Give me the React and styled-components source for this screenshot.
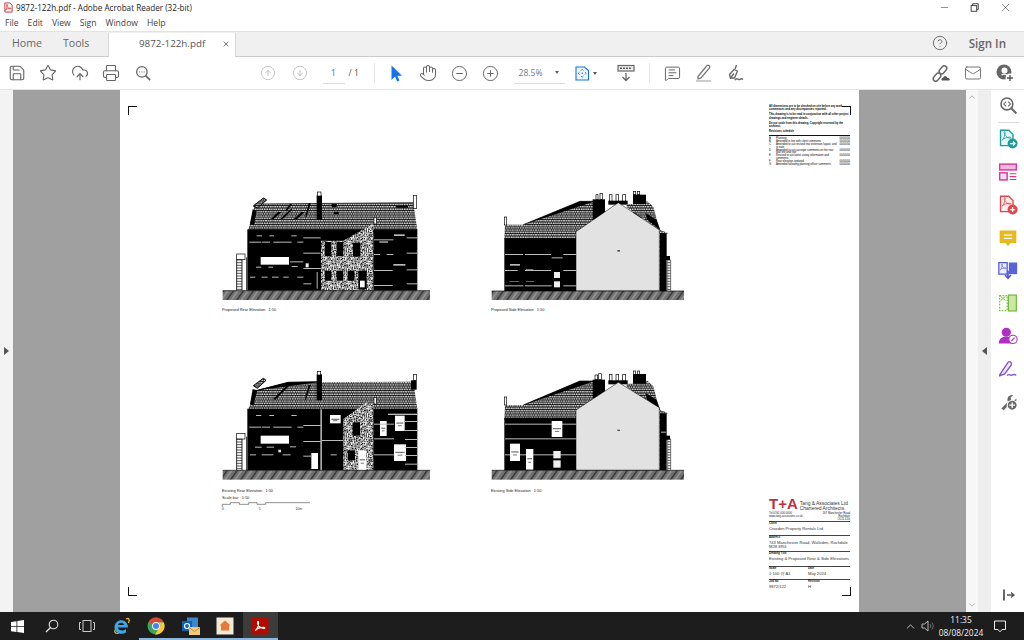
import React from 'react';
import styled, { createGlobalStyle } from 'styled-components';
import {
    Save, Star, CloudUpload, Printer, CircleArrowUp, CircleArrowDown, Hand, CircleMinus, CirclePlus,
    MessageSquareText, Mail, CircleHelp, ChevronUp, ChevronDown, Minus, X,
} from 'lucide-react';

const GlobalStyle = createGlobalStyle`
    html, body { margin: 0; padding: 0; background: #fff; }
    * { box-sizing: border-box; }
`;

const uiFont = '"Open Sans", "Noto Sans", sans-serif';
const drawingFont = '"Liberation Sans", Arial, sans-serif';

const Window = styled.div`
    width: 1024px;
    height: 640px;
    display: flex;
    flex-direction: column;
    overflow: hidden;
    font-family: ${uiFont};
    color: #444;
`;

const TitleBar = styled.div`
    height: 15px;
    display: flex;
    align-items: center;
    padding-left: 3px;
    gap: 2px;
    font-size: 8.15px;
    color: #222;
`;

const WindowControls = styled.div`
    margin-left: auto;
    display: flex;
    align-items: center;
    padding-right: 12px;
    gap: 20px;
    color: #333;
`;

const MenuBar = styled.div`
    height: 16px;
    display: flex;
    align-items: center;
    padding-left: 5px;
    gap: 9px;
    font-size: 8.6px;
    color: #444;
`;

const TabBar = styled.div`
    height: 26px;
    display: flex;
    align-items: stretch;
    background: #f0f0f0;
    border-top: 1px solid #e2e2e2;
    border-bottom: 1px solid #ccc;
    font-size: 10.6px;
    color: #666;
`;

const NavTab = styled.div`
    display: flex;
    align-items: center;
    padding: 0 0 2px 12px;
    width: ${p => p.$width}px;
`;

const DocTab = styled.div`
    width: 128px;
    margin-bottom: -1px;
    margin-top: 1px;
    background: #fff;
    border-left: 1px solid #d8d8d8;
    border-right: 1px solid #d8d8d8;
    display: flex;
    align-items: center;
    padding: 0 0 3px 30px;
    color: #555;
    gap: 17px;
    font-size: 9.8px;
    white-space: nowrap;
`;

const TabActions = styled.div`
    margin-left: auto;
    display: flex;
    align-items: center;
    gap: 21px;
    padding: 0 18px 2px 0;
`;

const SignIn = styled.span`
    font-size: 11.6px;
    font-weight: 600;
    color: #666;
`;

const Toolbar = styled.div`
    height: 33px;
    display: flex;
    align-items: center;
    border-bottom: 1px solid #e4e4e4;
    padding-left: 1px;
`;

const ToolGroup = styled.div`
    display: flex;
    align-items: center;
    margin-left: ${p => p.$offset || 0}px;
`;

const ToolSlot = styled.div`
    width: ${p => p.$width || 31.5}px;
    height: 24px;
    display: flex;
    align-items: center;
    justify-content: center;
    color: ${p => p.$color || '#666'};
`;

const Separator = styled.div`
    width: 1px;
    height: 20px;
    background: #e4e4e4;
`;

const PageField = styled.div`
    width: 22px;
    margin-left: 7px;
    text-align: center;
    font-size: 8.6px;
    line-height: 20px;
    color: #666;
    border-bottom: 1px solid #dcdcdc;
`;

const PageTotal = styled.div`
    font-size: 8.6px;
    color: #555;
    margin-left: 4px;
    width: 25px;
`;

const ZoomField = styled.div`
    width: 51px;
    display: flex;
    align-items: center;
    justify-content: space-between;
    padding: 0 6px 0 5px;
    font-size: 8.6px;
    line-height: 20px;
    color: #777;
    border-bottom: 1px solid #dcdcdc;
    margin-left: 7px;
`;

const Caret = styled.span`
    width: 0;
    height: 0;
    margin-left: ${p => p.$space || 0}px;
    border-left: 2.5px solid transparent;
    border-right: 2.5px solid transparent;
    border-top: 3px solid ${p => p.$color || '#666'};
`;

const Workspace = styled.div`
    flex: 1;
    display: flex;
    min-height: 0;
`;

const LeftRail = styled.div`
    width: 13px;
    background: #f3f3f3;
    display: flex;
    align-items: center;
    justify-content: center;
`;

const Arrow = styled.span`
    width: 0;
    height: 0;
    border-top: 4px solid transparent;
    border-bottom: 4px solid transparent;
    ${p => (p.$dir === 'left' ? 'border-right: 5px solid #555;' : 'border-left: 5px solid #555;')}
`;

const Canvas = styled.div`
    flex: 1;
    background: #a0a0a0;
    display: flex;
    justify-content: center;
`;

const Sheet = styled.div`
    width: 739px;
    background: #fff;
    position: relative;
    display: flex;
    font-family: ${drawingFont};
    color: #111;
`;

const CropMark = styled.span`
    position: absolute;
    width: 9px;
    height: 9px;
    border-color: #111;
    border-style: solid;
    border-width: ${p => (p.$top ? '1px' : '0')} ${p => (p.$right ? '1px' : '0')} ${p => (p.$top ? '0' : '1px')} ${p => (p.$right ? '0' : '1px')};
    ${p => (p.$top ? 'top: 16px;' : 'bottom: 16px;')}
    ${p => (p.$right ? 'right: 8px;' : 'left: 8px;')}
`;

const Drawings = styled.div`
    display: grid;
    grid-template-columns: 230px 220px;
    grid-template-rows: 140px 150px;
    column-gap: 40px;
    row-gap: 45px;
    padding: 90px 0 0 90px;
    align-content: start;
`;

const Figure = styled.figure`
    margin: 0;
    display: flex;
    flex-direction: column;
    svg { display: block; }
`;

const Caption = styled.figcaption`
    font-size: 3.9px;
    line-height: 7px;
    padding-left: ${p => p.$indent}px;
    margin-top: ${p => p.$gap || 0}px;
    color: #222;
    white-space: nowrap;
`;

const SideColumn = styled.div`
    margin-left: auto;
    width: 81px;
    margin-right: 9px;
    padding: 15px 0 16px;
    display: flex;
    flex-direction: column;
    justify-content: space-between;
`;

const Notes = styled.div`
    font-size: 2.7px;
    line-height: 3.2px;
    color: #000;
    font-weight: 700;
`;

const NoteText = styled.p`
    margin: 0 0 2px;
`;

const Revisions = styled.div`
    border-top: 0.6px solid #111;
    margin-top: 1.5px;
    padding-top: 1.5px;
    font-weight: 400;
    line-height: 2.8px;
`;

const RevisionRow = styled.div`
    display: grid;
    grid-template-columns: 7px 1fr 12px;
    margin-bottom: 0.2px;
    span:last-child { text-align: right; }
`;

const TitleBlock = styled.div`
    display: flex;
    flex-direction: column;
`;

const LogoRow = styled.div`
    display: flex;
    align-items: flex-start;
    gap: 2px;
    height: 14px;
`;

const LogoMark = styled.div`
    font-size: 15px;
    line-height: 12px;
    font-weight: 700;
    color: #b93442;
`;

const Practice = styled.div`
    font-size: 4.9px;
    line-height: 5px;
    padding-top: 3px;
    color: #333;
    white-space: nowrap;
`;

const ContactRow = styled.div`
    display: flex;
    justify-content: space-between;
    font-size: 2.8px;
    line-height: 3px;
    height: 9px;
    color: #222;
    span:last-child { text-align: right; }
`;

const Field = styled.div`
    border-top: 0.7px solid #444;
    height: ${p => p.$height}px;
    padding-top: 0.3px;
    min-width: 0;
`;

const FieldLabel = styled.div`
    font-size: 2.8px;
    line-height: 3.2px;
    font-weight: 700;
`;

const FieldValue = styled.div`
    font-size: 4.1px;
    line-height: 4.7px;
    padding-top: 1px;
    color: #333;
`;

const FieldPair = styled.div`
    display: grid;
    grid-template-columns: 39px 1fr;
`;

const ScrollTrack = styled.div`
    width: 12px;
    background: #f7f7f7;
    display: flex;
    flex-direction: column;
    justify-content: space-between;
    align-items: center;
    padding: 2px 0;
    color: #aaa;
`;

const Gutter = styled.div`
    width: 13px;
    background: #eeeeee;
    display: flex;
    align-items: center;
    justify-content: center;
`;

const Sidebar = styled.div`
    width: 33px;
    background: #fff;
    display: flex;
    flex-direction: column;
    align-items: center;
    padding-top: 2px;
    padding-left: 1px;
`;

const SideTool = styled.div`
    width: 32px;
    height: ${p => p.$height || 32.75}px;
    flex: none;
    display: flex;
    align-items: center;
    justify-content: center;
`;

const SideDivider = styled.div`
    width: 21px;
    height: 1px;
    background: #ddd;
    margin-top: 4px;
`;

const Collapse = styled.div`
    margin-top: auto;
    height: 34px;
    display: flex;
    align-items: center;
    color: #555;
`;

const Taskbar = styled.div`
    height: 28px;
    background: #1d1d1d;
    display: flex;
    align-items: stretch;
    color: #eee;
`;

const TaskSlot = styled.div`
    width: 34.7px;
    display: flex;
    align-items: center;
    justify-content: center;
    background: ${p => (p.$active ? '#3c3c3c' : 'transparent')};
    border-bottom: 2px solid ${p => (p.$open ? '#8ab8dc' : 'transparent')};
    border-top: 2px solid transparent;
`;

const Tray = styled.div`
    margin-left: auto;
    display: flex;
    align-items: center;
    padding-right: 10px;
`;

const TrayIcon = styled.div`
    width: ${p => p.$width}px;
    display: flex;
    align-items: center;
    justify-content: center;
`;

const Clock = styled.div`
    width: 50px;
    text-align: center;
    font-size: 8.4px;
    line-height: 13px;
    color: #f0f0f0;
`;

const ScaleLabels = styled.div`
    display: flex;
    width: 92px;
    justify-content: space-between;
    font-size: 3.4px;
    line-height: 4px;
    margin-top: -8px;
    padding-left: 12px;
    color: #333;
`;

const Svg = ({ size = 18, box = 24, children, ...rest }) => (
    <svg width={size} height={size} viewBox={`0 0 ${box} ${box}`} fill="none" {...rest}>
        {children}
    </svg>
);

const swoosh = 'M5 18c2.5-2.5 4.5-8 4.5-11.5 0-2-1.5-2-1.5 0 0 4 4.5 8.5 9 8.5 1.8 0 1.5-1.5-.5-1.5-3.5 0-9.5 1.5-11.5 4.5z';

const PdfFile = () => (
    <Svg size={11} box={24} stroke="#c9343a" strokeWidth="2">
        <path d="M4 2h11l5 5v15H4z" fill="#fbeeee" />
        <path d={swoosh} strokeWidth="1.4" />
    </Svg>
);

const RestoreIcon = () => (
    <Svg size={9} box={12} stroke="#333" strokeWidth="1.2">
        <rect x="1.5" y="3.5" width="7.5" height="7.5" />
        <path d="M3.5 3.5V1h7.5v7.5H9" />
    </Svg>
);

const SearchDots = () => (
    <Svg>
        <circle cx="10.5" cy="10.5" r="7" stroke="#666" strokeWidth="1.7" />
        <path d="M15.5 15.5L21.5 21.5" stroke="#666" strokeWidth="2.2" />
        <path d="M7 10.5h1M10 10.5h1M13 10.5h1" stroke="#666" strokeWidth="1.6" />
    </Svg>
);

const CursorIcon = () => (
    <Svg size={17} box={17}>
        <path d="M3.5 0.5V15l3.5-3.5 2.2 5 2.3-1-2.2-4.8H14z" fill="#1473e6" />
    </Svg>
);

const FitIcon = () => (
    <Svg size={15} box={15}>
        <path d="M1 1h8.500l4 3.500V14H1z" fill="#eef5fc" stroke="#1473e6" strokeWidth="1.1" />
        <path d="M6 4.500l1.200-1.200 1.200 1.200M6 10l1.200 1.200L8.400 10M4.500 6.200L3.300 7.300l1.200 1.200M10 6.200l1.200 1.100L10 8.500" stroke="#1473e6" strokeWidth="0.9" />
        <circle cx="7.200" cy="7.300" r="0.800" fill="#1473e6" />
    </Svg>
);

const ScrollModeIcon = () => (
    <Svg size={18} box={18}>
        <rect x="1" y="1.500" width="16" height="5.500" fill="#eee" stroke="#666" strokeWidth="1.200" />
        <path d="M3 4.200h12" stroke="#555" strokeWidth="1.400" strokeDasharray="2 1" />
        <path d="M9 9v7.500M5.500 13L9 16.500 12.500 13" stroke="#666" strokeWidth="1.300" />
    </Svg>
);

const HighlightIcon = () => (
    <Svg size={20} box={20}>
        <path d="M4 13.500L13 2.500c1.500-1 3.500.5 2.500 2.500L7 15l-3 .8z" stroke="#777" strokeWidth="1.300" />
        <path d="M2 18h15" stroke="#bbb" strokeWidth="1.500" />
    </Svg>
);

const SketchIcon = () => (
    <Svg size={20} box={20}>
        <path d="M9 6.500l3.500 1.500-3 7H5.500L4.500 11.500z" stroke="#666" strokeWidth="1.300" />
        <path d="M10 6L11.500 2M5 15.500L9 10.500" stroke="#666" strokeWidth="1.300" />
        <path d="M10 17c2-3 3 0 4.500-.5s2-1.500 3.500 0" stroke="#666" strokeWidth="1.500" />
    </Svg>
);

const ShareLinkIcon = () => (
    <Svg size={20} box={20}>
        <rect x="-6" y="-2.500" width="9" height="5" rx="2.500" stroke="#666" strokeWidth="1.400" transform="translate(6 13) rotate(-50)" />
        <rect x="-3" y="-2.500" width="9" height="5" rx="2.500" stroke="#666" strokeWidth="1.400" transform="translate(10 8) rotate(-50)" />
        <path d="M10.500 17.500c-1.500 0-1.500-2.500.5-2.500 .5-2.500 4-2.500 4.500 0 2-.5 3.500 2.500 1 2.500z" fill="#555" />
    </Svg>
);

const AddUserIcon = () => (
    <Svg size={20} box={20}>
        <circle cx="9" cy="9" r="7.500" fill="#666" />
        <circle cx="9.500" cy="7.500" r="3" fill="#fff" />
        <path d="M12.500 12.500a5 5 0 0 0-6-.5" stroke="#fff" strokeWidth="1.400" />
        <circle cx="15" cy="15" r="4.500" fill="#fff" />
        <path d="M15 12v6M12 15h6" stroke="#555" strokeWidth="1.400" />
    </Svg>
);

const SideSearch = () => (
    <Svg size={19}>
        <circle cx="10" cy="10" r="7.500" stroke="#666" strokeWidth="2" />
        <path d="M15.500 15.500L22 22" stroke="#666" strokeWidth="2.600" />
        <path d="M9 7l-3 3 3 3M11.500 7l3 3-3 3" stroke="#666" strokeWidth="1.300" />
    </Svg>
);

const DocWithBadge = ({ color, tint, children }) => (
    <Svg size={20}>
        <path d="M3 1.500h10l5 5V20H3z" fill={tint} stroke={color} strokeWidth="1.600" />
        <path d={swoosh} stroke={color} strokeWidth="1.200" transform="translate(1 -1) scale(.8)" />
        <circle cx="17.500" cy="17.500" r="6" fill={color} />
        {children}
    </Svg>
);

const LayoutTool = () => (
    <Svg size={20} stroke="#d8369d" strokeWidth="1.700">
        <rect x="2" y="2.500" width="20" height="7" fill="#f6b7dc" />
        <rect x="2" y="13" width="9" height="8.500" fill="#fbdcee" />
        <path d="M14 14h8M14 17.500h8M14 21h8" strokeWidth="1.300" />
    </Svg>
);

const CommentTool = () => (
    <Svg size={20}>
        <path d="M2 3h20v15h-7l-3 4-3-4H2z" fill="#e5b91f" />
        <path d="M7 8.500h10M7 12.500h10" stroke="#fff" strokeWidth="1.600" />
    </Svg>
);

const CombineTool = () => (
    <Svg size={20}>
        <path d="M1 3h10v14H1z" fill="#eef" stroke="#4f57d6" strokeWidth="1.500" />
        <path d="M13 3h10v14H13z" fill="#5a62d8" />
        <path d={swoosh} stroke="#4f57d6" strokeWidth="1.300" transform="translate(0 2) scale(.55)" />
        <path d="M12 13v8M8.500 18l3.500 4 3.500-4" stroke="#4f57d6" strokeWidth="2" />
    </Svg>
);

const OrganizeTool = () => (
    <Svg size={20}>
        <path d="M2 3h9v18H2z" stroke="#7fbf3f" strokeWidth="1.500" strokeDasharray="2 1.500" />
        <rect x="12.500" y="2.500" width="9.500" height="19" fill="#cbe8a8" stroke="#74b83a" strokeWidth="1.500" />
        <path d="M3 4l6 5M9 4L3 9" stroke="#7fbf3f" strokeWidth="1.200" />
    </Svg>
);

const RequestTool = () => (
    <Svg size={20}>
        <circle cx="10" cy="7.500" r="5.500" fill="#b12fc4" />
        <path d="M1 21c0-6 4-8 9-8s8 2 8 8z" fill="#b12fc4" />
        <circle cx="18" cy="16" r="5" fill="#fff" stroke="#b12fc4" strokeWidth="1.300" />
        <path d="M16 18l4-4" stroke="#b12fc4" strokeWidth="1.300" />
    </Svg>
);

const SignTool = () => (
    <Svg size={20}>
        <path d="M2 19L12 4c2-2 5 0 4 3L8 18l-6 2z" fill="#f0e8fa" stroke="#8556c6" strokeWidth="1.700" />
        <path d="M11 20c2-3 3 0 5-.5s3-2 6 0" stroke="#8556c6" strokeWidth="1.700" />
    </Svg>
);

const WrenchTool = () => (
    <Svg size={20}>
        <path d="M4 21l8-8c-2-4 1-9 6-8l-3 3 1 3 3 1 3-3c1 5-4 8-8 6l-7 8z" fill="#666" />
        <circle cx="17" cy="17" r="6" fill="#666" stroke="#fff" strokeWidth="1.300" />
        <path d="M17 13.500v7M13.500 17h7" stroke="#fff" strokeWidth="1.500" />
    </Svg>
);

const CollapseIcon = () => (
    <Svg size={14} box={14} stroke="#555" strokeWidth="1.400">
        <path d="M3 1.500v11" strokeWidth="1.800" />
        <path d="M6 7h7M10 4.500L13 7l-3 2.500" />
    </Svg>
);

const WindowsLogo = () => (
    <Svg size={13} box={13} fill="#fff">
        <path d="M0 2l5.500-.8v5H0zM6.300 1l6.700-1v6.200H6.300zM0 7h5.500v5L0 11.200zM6.300 7H13v6l-6.700-1z" />
    </Svg>
);

const SearchGlass = () => (
    <Svg size={14} box={14} stroke="#ddd" strokeWidth="1.100">
        <circle cx="8.500" cy="5.500" r="4.300" />
        <path d="M5.500 8.500L1 13" strokeWidth="1.400" />
    </Svg>
);

const TaskView = () => (
    <Svg size={16} box={16} stroke="#ccc" strokeWidth="1">
        <rect x="4" y="2.500" width="8" height="11" />
        <path d="M2 4.500H.5v7H2M14 4.500h1.500v7H14" />
    </Svg>
);

const EdgeLogo = () => (
    <Svg size={20} box={20}>
        <path d="M4 14c-1 3 1 4 4 3M15 3c3-1.500 4 .5 2.500 4" stroke="#e9b72c" strokeWidth="1.300" />
        <path d="M17 11.500H7c.3 3.500 5 4 8 1.500v3.500c-5 3-12 .5-11.500-5.500C4 5 9.500 3 13.500 5c2.500 1.500 3.500 4 3.500 6.500zM13 9c-.3-3-5.500-3-6 0z" fill="#3ea6e6" fillRule="evenodd" />
    </Svg>
);

const ChromeLogo = () => (
    <Svg size={18} box={18}>
        <circle cx="9" cy="9" r="8.500" fill="#3aa757" />
        <path d="M1.800 4.500A8.500 8.500 0 0 1 16.800 5.500H9a3.600 3.600 0 0 0-3.400 2.600z" fill="#db4437" />
        <path d="M16.800 5.500A8.500 8.500 0 0 1 8 17.400l3.900-6.200a3.600 3.600 0 0 0 0-5.700z" fill="#fcc934" />
        <circle cx="9" cy="9" r="3.900" fill="#fff" />
        <circle cx="9" cy="9" r="3" fill="#4285f4" />
    </Svg>
);

const OutlookLogo = () => (
    <Svg size={20} box={20}>
        <rect x="6" y="1.500" width="11" height="11" fill="#3b86cf" />
        <rect x="1" y="5" width="10" height="10" fill="#0f63b0" />
        <circle cx="6" cy="10" r="2.500" stroke="#fff" strokeWidth="1.200" />
        <rect x="8" y="11" width="11" height="8" fill="#f2c879" />
        <path d="M8 11.500l5.500 4 5.500-4" stroke="#a87c32" strokeWidth="0.800" />
    </Svg>
);

const HomeApp = () => (
    <Svg size={18} box={18}>
        <rect x="0.500" y="0.500" width="17" height="17" fill="#f4e9d2" />
        <path d="M9 3.500l5.500 5H13v5H5v-5H3.500z" fill="#e8793a" />
    </Svg>
);

const AcrobatApp = () => (
    <Svg size={18} box={18}>
        <rect x="0.500" y="0.500" width="17" height="17" rx="1.500" fill="#b30b00" />
        <path d={swoosh} stroke="#fff" strokeWidth="1.600" transform="scale(.72) translate(1 1)" />
    </Svg>
);

const Speaker = () => (
    <Svg size={14} box={14} stroke="#ccc" strokeWidth="0.900">
        <path d="M1 5h2.500L7 2v10L3.500 9H1z" />
        <path d="M9 5c1 1 1 3 0 4M11 3.500c1.500 2 1.500 5 0 7" stroke="#777" />
    </Svg>
);

const TrayNote = () => (
    <Svg size={14} box={14} stroke="#eee" strokeWidth="1">
        <path d="M1.500 2h11v8.500H9L7 12.800 5 10.500H1.500z" />
    </Svg>
);

// one speck per grid cell, jittered by a hash, so the stone stays even and repeatable
const stones = (() => {
    const hash = n => {
        const v = Math.sin(n * 12.9898) * 43758.5453;
        return v - Math.floor(v);
    };
    const list = [];
    for (let row = 0; row < 10; row += 1) {
        for (let col = 0; col < 10; col += 1) {
            const n = row * 10 + col + 1;
            list.push([col * 6 + hash(n) * 2, row * 6 + hash(n + 200) * 2, 2.5 + hash(n + 400) * 2.5, 2.5 + hash(n + 600) * 2.5]);
        }
    }
    return list;
})();

const Patterns = () => (
    <defs>
        <pattern id="tiles" width="14" height="14" patternUnits="userSpaceOnUse">
            <rect width="14" height="14" fill="#000" />
            <rect x="1" y="1.500" width="5" height="4" fill="#fff" />
            <rect x="8" y="1.500" width="5" height="4" fill="#fff" />
            <rect x="4.500" y="8.500" width="5" height="4" fill="#fff" />
            <rect x="11.500" y="8.500" width="2.500" height="4" fill="#fff" />
            <rect x="0" y="8.500" width="2.500" height="4" fill="#fff" />
        </pattern>
        <pattern id="stone" width="60" height="60" patternUnits="userSpaceOnUse">
            <rect width="60" height="60" fill="#fff" />
            {stones.map(([x, y, w, h], i) => (
                <rect key={i} x={x} y={y} width={w} height={h} fill="#000" />
            ))}
        </pattern>
        <pattern id="ground" width="30" height="28" patternUnits="userSpaceOnUse" patternTransform="skewX(-35)">
            <rect width="30" height="28" fill="#717171" />
            <rect width="6" height="28" fill="#3f3f3f" />
            <rect x="14" width="5" height="28" fill="#9a9a9a" />
        </pattern>
    </defs>
);

const Bars = ({ items, fill = '#ddd', h = 3 }) =>
    items.map(([x, y, w, height = h], i) => <rect key={i} x={x} y={y} width={w} height={height} fill={fill} />);

const Ground = ({ x, y, w }) => (
    <g>
        <rect x={x} y={y} width={w} height={28} fill="url(#ground)" />
        <path d={`M${x} ${y}h${w}`} stroke="#000" strokeWidth="2" />
    </g>
);

const OpenCap = ({ x, y, w, h }) => <rect x={x} y={y} width={w} height={h} fill="#fff" stroke="#000" strokeWidth="2" />;

const Ladder = ({ y, bottom }) => {
    const rungs = [];
    for (let r = y + 18; r < bottom; r += 8) rungs.push(r);
    return (
        <g stroke="#000">
            <rect x="80" y={y} width="25" height="17" fill="#fff" strokeWidth="2" />
            <path d={`M80 ${y + 17}V${bottom}M110 ${y + 10}V${bottom}M96 ${y + 17}V${bottom}`} strokeWidth="2.500" />
            {rungs.map(r => (
                <path key={r} d={`M80 ${r}H96`} strokeWidth="2" />
            ))}
        </g>
    );
};

const SideStairs = ({ y, bottom }) => {
    const rungs = [];
    for (let r = y; r < bottom; r += 8) rungs.push(r);
    return (
        <g stroke="#000">
            <path d={`M563 ${y}V${bottom}M572 ${y}V${bottom}`} strokeWidth="1.500" />
            {rungs.map(r => (
                <path key={r} d={`M563 ${r}H572`} strokeWidth="2" />
            ))}
        </g>
    );
};

const NoteWindow = ({ x, y, w, h }) => (
    <g>
        <rect x={x} y={y} width={w} height={h} fill="#fff" />
        <rect x={x + 4} y={y + h * 0.45} width={w - 8} height="3" fill="#555" />
        <rect x={x + w * 0.3} y={y + h * 0.62} width={w * 0.4} height="3" fill="#777" />
    </g>
);

const ProposedRear = () => (
    <svg width="230" height="120" viewBox="0 0 690 360">
        <Patterns />
        <path d="M135 72L610 68 622 150H115z" fill="url(#tiles)" />
        <path d="M135 72L610 68" stroke="#000" strokeWidth="2" />
        <path d="M130 78L160 54 170 60 142 84z" fill="url(#tiles)" stroke="#000" strokeWidth="3" />
        <path d="M120 132L128 88 140 92 132 135z" fill="#000" />
        <path d="M182 118l22-22h10l-24 22zM210 118l32-30h6l-30 30zM250 118l25-22h8l-22 22zM240 72l-15 20 5 2 16-22zM296 70l-10 40h4l12-40z" fill="#000" />
        <path d="M365 72h15v10h-15zM372 95h14v8h-14zM558 78h36v5h-36z" fill="#000" />
        <rect x="320" y="46" width="16" height="74" fill="#000" />
        <OpenCap x={322} y={36} w={11} h={12} />
        <OpenCap x={610} y={46} w={9} h={40} />
        <rect x="112" y="148" width="510" height="184" fill="#000" />
        <path d="M333 182H400L490 130V332H333z" fill="url(#stone)" />
        <OpenCap x={492} y={112} w={7} h={20} />
        <Bars items={[[345, 186, 19, 42], [380, 186, 20, 42], [429, 188, 22, 42], [345, 272, 19, 30], [380, 272, 20, 30], [413, 272, 20, 30], [445, 272, 25, 56]]} fill="#000" />
        <rect x="450" y="302" width="14" height="20" fill="#fff" />
        <rect x="152" y="231" width="85" height="23" fill="#fff" />
        <Bars items={[[118, 185, 35], [155, 185, 25], [190, 185, 55], [262, 185, 18], [280, 172, 52], [280, 218, 52], [280, 264, 52], [240, 244, 40], [280, 310, 24], [140, 166, 16], [178, 166, 14], [244, 166, 16], [120, 290, 16], [155, 290, 18], [186, 290, 20], [220, 290, 16], [262, 290, 18], [138, 260, 16], [175, 260, 14], [245, 258, 18], [492, 178, 58], [492, 222, 18], [530, 222, 20], [492, 270, 56], [492, 315, 56], [590, 172, 32], [590, 218, 32], [590, 268, 32], [590, 310, 32], [508, 184, 26, 4], [552, 163, 32, 5], [550, 252, 36, 5]]} fill="#bbb" />
        <rect x="287" y="250" width="9" height="12" fill="#eee" />
        <rect x="320" y="276" width="3" height="50" fill="#bbb" />
        <Ladder y={222} bottom={332} />
        <Ground x={38} y={332} w={622} />
    </svg>
);

const ProposedSide = () => (
    <svg width="220" height="120" viewBox="0 0 660 360">
        <path d="M75 134H130L300 65H345V178H73z" fill="url(#tiles)" />
        <path d="M130 134L300 64H345" stroke="#000" strokeWidth="2" />
        <OpenCap x={73} y={111} w={7} h={24} />
        <OpenCap x={348} y={44} w={6} h={14} />
        <OpenCap x={360} y={40} w={7} h={18} />
        <OpenCap x={388} y={44} w={8} h={20} />
        <OpenCap x={408} y={44} w={8} h={20} />
        <OpenCap x={428} y={44} w={9} h={20} />
        <OpenCap x={460} y={34} w={7} h={10} />
        <OpenCap x={472} y={34} w={7} h={10} />
        <rect x="338" y="58" width="37" height="60" fill="#000" />
        <rect x="385" y="62" width="58" height="12" fill="#000" />
        <rect x="459" y="44" width="39" height="70" fill="#000" />
        <path d="M440 72H498L500 62 520 80 532 125 541 150 565 160 540 164V333H538L538 150 440 82z" fill="url(#tiles)" />
        <path d="M498 100L530 120 540 150 500 118z" fill="#000" />
        <rect x="73" y="175" width="220" height="158" fill="#000" />
        <rect x="540" y="160" width="20" height="173" fill="#000" />
        <rect x="558" y="228" width="12" height="12" fill="#000" />
        <path d="M288 155L415 68 538 150V333H288z" fill="#e2e2e2" stroke="#000" strokeWidth="1.500" />
        <Bars items={[[75, 222, 54], [135, 222, 78], [250, 222, 38], [215, 232, 33], [75, 270, 38], [135, 270, 78], [250, 270, 38], [75, 316, 55], [135, 316, 80], [250, 316, 38], [90, 252, 30, 5], [138, 268, 22, 4]]} fill="#bbb" />
        <Bars items={[[88, 303, 30], [138, 303, 24]]} fill="#666" />
        <rect x="222" y="276" width="18" height="18" fill="#eee" />
        <rect x="222" y="304" width="18" height="18" fill="#eee" />
        <rect x="412" y="210" width="8" height="5" fill="#555" />
        <SideStairs y={240} bottom={333} />
        <Ground x={35} y={333} w={577} />
    </svg>
);

const ExistingRear = () => (
    <svg width="230" height="115" viewBox="0 0 690 345">
        <path d="M140 75L235 52 610 50 622 132H115z" fill="url(#tiles)" />
        <path d="M130 62L160 40 168 46 142 70z" fill="url(#tiles)" stroke="#000" strokeWidth="3" />
        <path d="M120 118L128 72 142 76 130 122z" fill="#000" />
        <path d="M142 76L235 52 335 50" stroke="#000" strokeWidth="3" />
        <path d="M240 52l-50 50 6 2 52-52zM296 60l-12 45h4l14-45z" fill="#000" />
        <rect x="320" y="28" width="16" height="78" fill="#000" />
        <OpenCap x={322} y={19} w={10} h={11} />
        <OpenCap x={610} y={28} w={9} h={18} />
        <rect x="603" y="46" width="17" height="28" fill="#000" />
        <rect x="112" y="131" width="510" height="185" fill="#000" />
        <path d="M400 162L470 112 490 118V316H400z" fill="url(#stone)" />
        <OpenCap x={492} y={97} w={7} h={20} />
        <Bars items={[[428, 172, 22, 40], [413, 256, 22, 30]]} fill="#000" />
        <rect x="152" y="212" width="85" height="24" fill="#fff" />
        <rect x="331" y="133" width="5" height="183" fill="#aaa" />
        <NoteWindow x={360} y={150} w={32} h={25} />
        <NoteWindow x={445} y={256} w={24} h={60} />
        <NoteWindow x={510} y={168} w={20} h={45} />
        <NoteWindow x={555} y={152} w={29} h={46} />
        <NoteWindow x={552} y={238} w={36} h={50} />
        <rect x="304" y="264" width="20" height="48" fill="#fff" />
        <Bars items={[[138, 150, 16], [178, 150, 14], [244, 150, 16], [118, 185, 35], [155, 185, 25], [190, 185, 55], [262, 185, 18], [280, 180, 52], [280, 228, 52], [336, 225, 64], [120, 268, 18], [155, 268, 35], [218, 268, 24], [280, 272, 24], [362, 268, 18], [135, 245, 20], [170, 245, 22], [240, 244, 18], [492, 176, 60], [492, 220, 60], [492, 268, 60], [534, 146, 88, 4], [585, 168, 37], [585, 195, 37], [585, 222, 37], [585, 246, 37], [585, 270, 37], [585, 296, 37]]} fill="#bbb" />
        <rect x="205" y="254" width="8" height="8" fill="#ddd" />
        <Ladder y={205} bottom={316} />
        <Ground x={38} y={316} w={622} />
    </svg>
);

const ExistingSide = () => (
    <svg width="220" height="115" viewBox="0 0 660 345">
        <path d="M75 120H130L300 48H345V165H73z" fill="url(#tiles)" />
        <path d="M130 120L300 48H345" stroke="#000" strokeWidth="2" />
        <OpenCap x={73} y={96} w={7} h={24} />
        <OpenCap x={345} y={30} w={8} h={14} />
        <OpenCap x={356} y={26} w={8} h={18} />
        <OpenCap x={388} y={28} w={8} h={20} />
        <OpenCap x={408} y={28} w={8} h={20} />
        <OpenCap x={428} y={28} w={9} h={20} />
        <OpenCap x={460} y={18} w={7} h={10} />
        <OpenCap x={472} y={18} w={7} h={10} />
        <rect x="338" y="44" width="37" height="56" fill="#000" />
        <rect x="385" y="46" width="58" height="12" fill="#000" />
        <rect x="459" y="27" width="39" height="70" fill="#000" />
        <path d="M440 56H498L500 46 520 64 532 110 541 135 565 145 540 149V316H538L538 135 440 66z" fill="url(#tiles)" />
        <path d="M498 85L530 105 540 135 500 103z" fill="#000" />
        <rect x="73" y="158" width="220" height="158" fill="#000" />
        <rect x="540" y="145" width="20" height="171" fill="#000" />
        <rect x="558" y="212" width="12" height="12" fill="#000" />
        <path d="M288 135L415 52 538 128V316H288z" fill="#e2e2e2" stroke="#000" strokeWidth="1.500" />
        <Bars items={[[75, 176, 215], [75, 220, 215], [75, 268, 215], [543, 200, 15]]} fill="#bbb" />
        <NoteWindow x={215} y={168} w={32} h={48} />
        <NoteWindow x={90} y={236} w={30} h={52} />
        <NoteWindow x={138} y={252} w={22} h={62} />
        <rect x="220" y="258" width="22" height="22" fill="#eee" />
        <rect x="220" y="286" width="22" height="22" fill="#eee" />
        <rect x="412" y="194" width="8" height="4" fill="#555" />
        <SideStairs y={222} bottom={316} />
        <Ground x={35} y={316} w={577} />
    </svg>
);

const ScaleBar = () => (
    <svg width="100" height="14" viewBox="0 0 300 42" fill="none">
        <path d="M37 16V8H61V3H88V8H116V3H141V8H167V3H300" stroke="#222" strokeWidth="1.500" transform="translate(0 2)" />
    </svg>
);

const revisions = [
    ['A', 'Planning', '00/00/00'],
    ['B', 'Amended in line with client comments', '00/00/00'],
    ['C', 'Amended to suit revised rear extension layout, and to note', '00/00/00'],
    ['D', 'Amended to suit surveyor comments on the rear wall line and roof', '00/00/00'],
    ['E', 'Revised to suit latest survey information and comments', '00/00/00'],
    ['F', 'Rear elevation updated', '00/00/00'],
    ['G', 'Amended following planning officer comments', '00/00/00'],
];

const leftTools = [Save, Star, CloudUpload, Printer];
const sideTools = [
    <DocWithBadge key="export" color="#1f9a9d" tint="#e6f6f6"><path d="M14.500 17.500h6M18 15l2.500 2.500L18 20" stroke="#fff" strokeWidth="1.400" /></DocWithBadge>,
    <LayoutTool key="layout" />,
    <DocWithBadge key="create" color="#e0464e" tint="#fdecec"><path d="M17.500 14.500v6M14.500 17.500h6" stroke="#fff" strokeWidth="1.600" /></DocWithBadge>,
    <CommentTool key="comment" />,
    <CombineTool key="combine" />,
    <OrganizeTool key="organize" />,
    <RequestTool key="request" />,
    <SignTool key="sign" />,
    <WrenchTool key="tools" />,
];

const App = () => (
    <Window>
        <GlobalStyle />
        <TitleBar>
            <PdfFile />
            <span>9872-122h.pdf - Adobe Acrobat Reader (32-bit)</span>
            <WindowControls>
                <Minus size={11} strokeWidth={1.2} />
                <RestoreIcon />
                <X size={13} strokeWidth={1} />
            </WindowControls>
        </TitleBar>
        <MenuBar>
            <span>File</span>
            <span>Edit</span>
            <span>View</span>
            <span>Sign</span>
            <span>Window</span>
            <span>Help</span>
        </MenuBar>
        <TabBar>
            <NavTab $width={51}>Home</NavTab>
            <NavTab $width={57}>Tools</NavTab>
            <DocTab>
                <span>9872-122h.pdf</span>
                <X size={8} strokeWidth={2.4} />
            </DocTab>
            <TabActions>
                <CircleHelp size={16} strokeWidth={1.4} />
                <SignIn>Sign In</SignIn>
            </TabActions>
        </TabBar>
        <Toolbar>
            <ToolGroup>
                {leftTools.map((Icon, i) => (
                    <ToolSlot key={i}>
                        <Icon size={18} strokeWidth={1.5} />
                    </ToolSlot>
                ))}
                <ToolSlot><SearchDots /></ToolSlot>
            </ToolGroup>
            <ToolGroup $offset={94}>
                <ToolSlot $color="#bbb"><CircleArrowUp size={16} strokeWidth={1.3} /></ToolSlot>
                <ToolSlot $color="#bbb"><CircleArrowDown size={16} strokeWidth={1.3} /></ToolSlot>
                <PageField>1</PageField>
                <PageTotal>/ 1</PageTotal>
                <Separator />
                <ToolSlot $width={6} />
                <ToolSlot><CursorIcon /></ToolSlot>
                <ToolSlot><Hand size={18} strokeWidth={1.4} /></ToolSlot>
                <ToolSlot><CircleMinus size={17} strokeWidth={1.4} /></ToolSlot>
                <ToolSlot><CirclePlus size={17} strokeWidth={1.4} /></ToolSlot>
                <ZoomField>
                    <span>28.5%</span>
                    <Caret />
                </ZoomField>
                <ToolSlot $width={42}>
                    <FitIcon />
                    <Caret $color="#555" $space={3} />
                </ToolSlot>
                <ToolSlot $width={38}><ScrollModeIcon /></ToolSlot>
                <ToolSlot $width={4} />
                <Separator />
                <ToolSlot $width={7} />
                <ToolSlot><MessageSquareText size={17} strokeWidth={1.4} /></ToolSlot>
                <ToolSlot><HighlightIcon /></ToolSlot>
                <ToolSlot><SketchIcon /></ToolSlot>
            </ToolGroup>
            <ToolGroup $offset={175}>
                <ToolSlot><ShareLinkIcon /></ToolSlot>
                <ToolSlot><Mail size={18} strokeWidth={1.2} /></ToolSlot>
                <ToolSlot><AddUserIcon /></ToolSlot>
            </ToolGroup>
        </Toolbar>
        <Workspace>
            <LeftRail>
                <Arrow $dir="right" />
            </LeftRail>
            <Canvas>
                <Sheet>
                    <CropMark $top />
                    <CropMark $top $right />
                    <CropMark />
                    <CropMark $right />
                    <Drawings>
                        <Figure>
                            <ProposedRear />
                            <Caption $indent={12} $gap={6}>Proposed Rear Elevation &nbsp; 1:50</Caption>
                        </Figure>
                        <Figure>
                            <ProposedSide />
                            <Caption $indent={11} $gap={6}>Proposed Side Elevation &nbsp; 1:50</Caption>
                        </Figure>
                        <Figure>
                            <ExistingRear />
                            <Caption $indent={12} $gap={7}>Existing Rear Elevation &nbsp; 1:50</Caption>
                            <Caption $indent={12}>Scale bar &nbsp; 1:50</Caption>
                            <ScaleBar />
                            <ScaleLabels>
                                <span>0</span>
                                <span>5</span>
                                <span>10m</span>
                            </ScaleLabels>
                        </Figure>
                        <Figure>
                            <ExistingSide />
                            <Caption $indent={11} $gap={7}>Existing Side Elevation &nbsp; 1:50</Caption>
                        </Figure>
                    </Drawings>
                    <SideColumn>
                        <Notes>
                            <NoteText>All dimensions are to be checked on site before any work commences and any discrepancies reported.</NoteText>
                            <NoteText>This drawing is to be read in conjunction with all other project drawings and engineer details.</NoteText>
                            <NoteText>Do not scale from this drawing. Copyright reserved by the architect.</NoteText>
                            <NoteText>Revisions schedule</NoteText>
                            <Revisions>
                                {revisions.map(([rev, text, date]) => (
                                    <RevisionRow key={rev}>
                                        <span>{rev}</span>
                                        <span>{text}</span>
                                        <span>{date}</span>
                                    </RevisionRow>
                                ))}
                            </Revisions>
                        </Notes>
                        <TitleBlock>
                            <LogoRow>
                                <LogoMark>T+A</LogoMark>
                                <Practice>
                                    Tang &amp; Associates Ltd
                                    <br />
                                    Chartered Architects
                                </Practice>
                            </LogoRow>
                            <ContactRow>
                                <span>Tel 0161 000 0000<br />www.tang-associates.co.uk</span>
                                <span>167 Manchester Road<br />Rochdale<br />OL11 4JG</span>
                            </ContactRow>
                            <Field $height={14}>
                                <FieldLabel>Client</FieldLabel>
                                <FieldValue>Croxden Property Rentals Ltd</FieldValue>
                            </Field>
                            <Field $height={16}>
                                <FieldLabel>Address</FieldLabel>
                                <FieldValue>743 Manchester Road, Wallsden, Rochdale M28 3RG</FieldValue>
                            </Field>
                            <Field $height={15}>
                                <FieldLabel>Drawing Title</FieldLabel>
                                <FieldValue>Existing &amp; Proposed Rear &amp; Side Elevations</FieldValue>
                            </Field>
                            <FieldPair>
                                <Field $height={13}>
                                    <FieldLabel>Scale</FieldLabel>
                                    <FieldValue>1:100 @ A1</FieldValue>
                                </Field>
                                <Field $height={13}>
                                    <FieldLabel>Date</FieldLabel>
                                    <FieldValue>May 2024</FieldValue>
                                </Field>
                            </FieldPair>
                            <FieldPair>
                                <Field $height={17}>
                                    <FieldLabel>Job No</FieldLabel>
                                    <FieldValue>9872/122</FieldValue>
                                </Field>
                                <Field $height={17}>
                                    <FieldLabel>Revision</FieldLabel>
                                    <FieldValue>H</FieldValue>
                                </Field>
                            </FieldPair>
                        </TitleBlock>
                    </SideColumn>
                </Sheet>
            </Canvas>
            <ScrollTrack>
                <ChevronUp size={10} />
                <ChevronDown size={10} />
            </ScrollTrack>
            <Gutter>
                <Arrow $dir="left" />
            </Gutter>
            <Sidebar>
                <SideTool $height={26}><SideSearch /></SideTool>
                <SideDivider />
                {sideTools.map(tool => (
                    <SideTool key={tool.key}>{tool}</SideTool>
                ))}
                <Collapse><CollapseIcon /></Collapse>
            </Sidebar>
        </Workspace>
        <Taskbar>
            <TaskSlot><WindowsLogo /></TaskSlot>
            <TaskSlot><SearchGlass /></TaskSlot>
            <TaskSlot><TaskView /></TaskSlot>
            <TaskSlot><EdgeLogo /></TaskSlot>
            <TaskSlot $open><ChromeLogo /></TaskSlot>
            <TaskSlot $open><OutlookLogo /></TaskSlot>
            <TaskSlot $open><HomeApp /></TaskSlot>
            <TaskSlot $open $active><AcrobatApp /></TaskSlot>
            <Tray>
                <TrayIcon $width={20}><ChevronUp size={13} strokeWidth={1.4} /></TrayIcon>
                <TrayIcon $width={16}><Speaker /></TrayIcon>
                <Clock>
                    11:35
                    <br />
                    08/08/2024
                </Clock>
                <TrayIcon $width={28}><TrayNote /></TrayIcon>
            </Tray>
        </Taskbar>
    </Window>
);

export default App;
